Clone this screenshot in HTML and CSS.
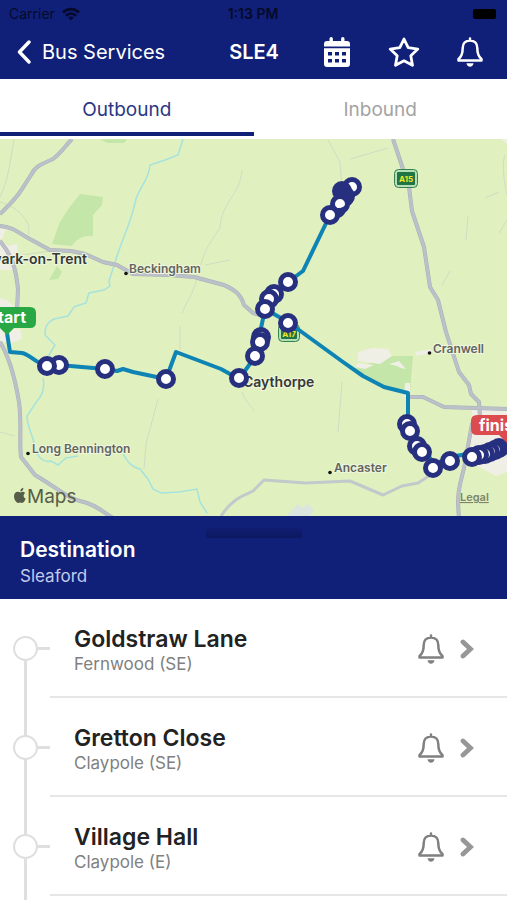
FILE: index.html
```html
<!DOCTYPE html>
<html lang="en">
<head>
    <meta charset="UTF-8">
    <meta name="viewport" content="width=device-width, initial-scale=1.0">
    <title>SLE4</title>
    <link rel="stylesheet" href="styles.css">
</head>
<body>
    <svg class="defs" aria-hidden="true">
        <symbol id="bell" viewBox="0 0 26 30">
            <path d="M13 1.500v2M13 3.500c-4.800 0-7.300 3.300-7.300 7.500C5.700 17.500 4.300 20 1.500 22v1.500h23V22c-2.800-2-4.200-4.500-4.200-11 0-4.200-2.500-7.500-7.300-7.500z" fill="none" stroke="currentColor" stroke-width="2.500" stroke-linecap="round" stroke-linejoin="round"/>
            <path d="M9.500 26.300h7c-.3 2.200-1.700 3.400-3.500 3.400s-3.200-1.200-3.500-3.400z" fill="currentColor"/>
        </symbol>
        <symbol id="chevron" viewBox="0 0 14 20">
            <path d="M3 3l7.500 7L3 17" fill="none" stroke="currentColor" stroke-width="4.800" stroke-linecap="round" stroke-linejoin="miter"/>
        </symbol>
    </svg>

    <div class="app">
        <header class="header">
            <div class="status">
                <div class="carrier">
                    <span>Carrier</span>
                    <svg width="18" height="14" viewBox="0 0 18 14">
                        <g fill="none" stroke="currentColor" stroke-width="2.800">
                            <path d="M1 5.500c4.500-4.600 11.500-4.600 16 0"/>
                            <path d="M4 8.800c2.900-2.900 7.100-2.900 10 0"/>
                        </g>
                        <path d="M9 13.500l-2.800-3c1.600-1.500 4-1.500 5.600 0z" fill="currentColor"/>
                    </svg>
                </div>
                <div class="time">1:13 PM</div>
                <div class="battery"><span></span></div>
            </div>
            <nav class="nav">
                <a class="back" href="#">
                    <svg width="14" height="24" viewBox="0 0 14 24"><path d="M12 2L2.500 12 12 22" fill="none" stroke="currentColor" stroke-width="3.400" stroke-linecap="round" stroke-linejoin="round"/></svg>
                    Bus Services
                </a>
                <h1 class="title">SLE4</h1>
                <div class="actions">
                    <button class="icon-btn" aria-label="Timetable">
                        <svg width="28" height="30" viewBox="0 0 28 30">
                            <path d="M1 9.500V7c0-2 1-3 3-3h2.500V1.800a1.500 1.500 0 0 1 3.400 0V4h8.200V1.800a1.500 1.500 0 0 1 3.400 0V4H24c2 0 3 1 3 3v2.500z" fill="currentColor"/>
                            <path fill-rule="evenodd" d="M1 11.200h26V27c0 2-1 3-3 3H4c-2 0-3-1-3-3zM5 15v3.600h4V15zM12 15v3.600h4V15zM19 15v3.600h4V15zM5 22v3.600h4V22zM12 22v3.600h4V22zM19 22v3.600h4V22z" fill="currentColor"/>
                        </svg>
                    </button>
                    <button class="icon-btn" aria-label="Favourite">
                        <svg width="32" height="30" viewBox="0 0 32 30">
                            <path d="M16 2l4.200 8.700 9.600 1.400-7 6.700 1.700 9.500L16 23.800l-8.500 4.500 1.700-9.500-7-6.700 9.600-1.400z" fill="none" stroke="currentColor" stroke-width="2.800" stroke-linejoin="round"/>
                        </svg>
                    </button>
                    <button class="icon-btn" aria-label="Alerts">
                        <svg width="26" height="30"><use href="#bell"/></svg>
                    </button>
                </div>
            </nav>
        </header>

        <div class="tabs" role="tablist">
            <button class="tab active" role="tab" aria-selected="true">Outbound</button>
            <button class="tab" role="tab" aria-selected="false">Inbound</button>
        </div>

        <svg class="map" viewBox="0 139 507 377">
            <!-- woods and built up areas -->
            <path class="wood" d="M80 194l23 3-1 8-9 10v21c-9-1-17 3-21 10l-20-2 8-22 9-14zM57 266l5 6-4 7-9 1z"/>
            <path class="wood" d="M100 139h27l-3 4h-17zM392 356h21l-3 36-16-1-24-12-18-10z"/>
            <path class="town" d="M0 228l6 1-4 10H0zM0 240l9 6 8-2 2 18-7 8H0zM0 298l7 2 8 7H0zM0 329h20l2 10-10 4-12-2z"/>
            <path class="town" d="M358 352l14-4 16 1 4 7-12 8-22-3zM358 363l16 2-9 4-10-2zM389 364l10-3 7 8-5-1-4-2zM405 383h5v14h-6z"/>
            <path class="town" d="M472 409h35v63l-11 4-26-14zM415 352l16-3v4l-14 3zM501 139h6v5z"/>
            <path class="airfield" d="M288 514l10-10 4 4 6-4 6 7-5 5h-21z"/>

            <!-- lanes -->
            <g class="lane">
                <path d="M14 139c-4 24-6 42-14 58M0 202c16 4 26 16 28 22 2 6 0 8 1 11M328 140l12 22 2 26M350 159l38-11M242 170c-2 26-20 30-22 58-15 22-14 20-22 45-4 20-8 22-16 40"/>
                <path d="M158 399l-12 45-2 25M342 382l-4 50M468 216l-2 24M450 271l-8 14M505 155c-4 10 0 30 2 40M485 198l14-6M0 432l15 4M242 392c4 12 12 16 12 19M507 220l-8 13M205 265l25-5M180 350v-24M22 255l28-4"/>
            </g>

            <!-- rivers -->
            <g class="river">
                <path d="M183 139l-5 16-13 5-15 5c-1 14-9 20-14 34-5 24-13 38-20 60l-7 22 1 5-6 4-15 3-3 10-12 4-6 9-14 3c-8 4-9 9-9 16l10 10-6 10-12 10"/>
                <path d="M43 378c2 10-1 18-6 23l-10 15c0 12 7 20 8 33 4 10 9 14 16 12l7 4 8-7 12-2M123 454c5 8 8 13 17 15l8 10 5 10 8 4 18-1 18-3 3 13 7 11"/>
            </g>

            <!-- minor and main roads -->
            <g class="road-edge">
                <path d="M0 214c8-8 16-15 22-25l9-14c4-8 8-10 20-15 8-4 14-14 21-21M0 226c14 1 20 8 28 12l22 12 21 1 14 3 18 8 14 3 16 9 36 1 25 2 30 8c8 4 16 7 20 20l9 8 14 4"/>
                <path d="M0 241c12 14 16 28 18 48l-1 22M0 342c10 16 15 36 19 60 3 22 0 38 2 55l14 18c22 13 34 24 45 26 15 3 23 11 33 17"/>
                <path d="M393 139l16 48 3 24 12 36 6 40 8 13 8 32 13 40 10 13 2 9 8 8 1 14-8 8-8 44c-6 23-7 28-5 50"/>
                <path d="M408 397h15l21 10 63 2"/>
            </g>
            <g class="road">
                <path d="M0 214c8-8 16-15 22-25l9-14c4-8 8-10 20-15 8-4 14-14 21-21M0 226c14 1 20 8 28 12l22 12 21 1 14 3 18 8 14 3 16 9 36 1 25 2 30 8c8 4 16 7 20 20l9 8 14 4"/>
                <path d="M0 241c12 14 16 28 18 48l-1 22M0 342c10 16 15 36 19 60 3 22 0 38 2 55l14 18c22 13 34 24 45 26 15 3 23 11 33 17"/>
                <path d="M393 139l16 48 3 24 12 36 6 40 8 13 8 32 13 40 10 13 2 9 8 8 1 14-8 8-8 44c-6 23-7 28-5 50"/>
                <path d="M408 397h15l21 10 63 2"/>
            </g>
            <path class="road-minor" d="M221 516c12-18 22-20 32-25l11-11 42 3 44-2 33 14 19-9 16-3 14-9"/>

            <!-- places -->
            <g class="place">
                <text x="129" y="273">Beckingham</text>
                <text x="32" y="453">Long Bennington</text>
                <text x="433" y="353">Cranwell</text>
                <text x="334" y="472">Ancaster</text>
            </g>
            <g class="place place-big">
                <text x="87" y="264" text-anchor="end">Newark-on-Trent</text>
                <text x="243" y="387">Caythorpe</text>
            </g>
            <g class="dot">
                <circle cx="126" cy="273.500" r="1.800"/>
                <circle cx="28" cy="453.500" r="1.800"/>
                <circle cx="429.500" cy="353" r="1.800"/>
                <circle cx="330" cy="472.500" r="1.800"/>
            </g>

            <!-- road numbers -->
            <g class="shield">
                <rect class="shield-frame" x="394.500" y="169.500" width="23" height="18" rx="4"/>
                <rect x="397" y="172" width="18" height="13" rx="1"/>
                <text x="406" y="182">A15</text>
                <rect class="shield-frame" x="278.500" y="324.500" width="21" height="17" rx="4"/>
                <rect x="281" y="327" width="16" height="12" rx="1"/>
                <text x="289" y="337">A17</text>
            </g>

            <!-- bus route -->
            <path class="route" d="M7 333l3 19 12 1c6 1 10 6 16 9l9 4 12-1 46 4 12 2 6-2 10 3 33 7 10-27 45 17 18 10 16-22 10-48 23 13 55 40 20 14 21 11 24 6v27l3 7 12 21 11 16 17-7 21-4 25-8"/>
            <path class="route" d="M265 309l8-15 15-12 15-11 27-56 22-29"/>

            <path class="pin-start" d="M0 307h30q6 0 6 6v9q0 6-6 6H14l-7 7-7-7z"/>
            <text class="pin-text" x="26" y="323" text-anchor="end">start</text>

            <g class="stop-pin">
                <circle cx="352" cy="187" r="7.500"/>
                <circle cx="345" cy="196" r="7.500"/>
                <circle class="full" cx="342" cy="191" r="7.500"/>
                <circle class="full" cx="344" cy="198" r="7"/>
                <circle cx="340" cy="204" r="7.500"/>
                <path class="fill" d="M334 206c3 3 9 3 12-2 3 7-4 16-12 14z"/>
                <circle cx="330" cy="215" r="7.500"/>
                <circle cx="288" cy="282" r="7.500"/>
                <circle cx="274" cy="294" r="7.500"/>
                <circle cx="269" cy="299" r="7.500"/>
                <circle cx="265" cy="309" r="7.500"/>
                <circle cx="288" cy="323" r="7.500"/>
                <circle cx="261" cy="337" r="7.500"/>
                <circle cx="260" cy="342" r="7.500"/>
                <circle cx="255" cy="356" r="7.500"/>
                <circle cx="239" cy="378" r="7.500"/>
                <circle cx="166" cy="379" r="7.500"/>
                <circle cx="105" cy="369" r="7.500"/>
                <circle cx="59" cy="365" r="7.500"/>
                <circle cx="47" cy="366" r="7.500"/>
                <circle cx="407" cy="424" r="7.500"/>
                <circle cx="410" cy="431" r="7.500"/>
                <circle cx="417" cy="446" r="7.500"/>
                <circle cx="422" cy="452" r="7.500"/>
                <circle cx="433" cy="468" r="7.500"/>
                <circle cx="450" cy="461" r="7.500"/>
                <circle cx="499" cy="448" r="7.500"/>
                <circle cx="495" cy="450" r="7.500"/>
                <circle cx="490" cy="452" r="7.500"/>
                <circle cx="485" cy="454" r="7.500"/>
                <circle cx="479" cy="455" r="7.500"/>
                <circle cx="472" cy="457" r="7.500"/>
            </g>

            <path class="pin-finish" d="M477 415h30v28l-8-8h-22q-6 0-6-6v-8q0-6 6-6z"/>
            <text class="pin-text" x="479" y="431">finish</text>

            <!-- attribution -->
            <path class="apple" d="M20.500 492.500c1.800-1.200 3.300-.9 4.600.4-2.200 1.700-1.900 4.500.6 5.700-.9 2.600-2.300 4.400-3.600 4.400-.8 0-1.200-.4-2-.4s-1.300.4-2 .4c-1.900 0-4.100-3.800-4.100-6.700 0-3.800 3-5.500 6.500-3.800zM20.300 491.600c-.1-2 1.300-3.600 3.100-3.800.1 2.100-1.400 3.700-3.100 3.800z"/>
            <text class="maps" x="27" y="503">Maps</text>
            <a href="#"><text class="legal" x="460" y="501">Legal</text></a>
        </svg>

        <section class="destination">
            <div class="handle"></div>
            <h2>Destination</h2>
            <p>Sleaford</p>
        </section>

        <ul class="stops">
            <li class="stop">
                <span class="marker"></span>
                <div class="stop-body">
                    <div class="stop-text">
                        <h3>Goldstraw Lane</h3>
                        <p>Fernwood (SE)</p>
                    </div>
                    <button class="icon-btn" aria-label="Set alert for Goldstraw Lane"><svg width="26" height="30"><use href="#bell"/></svg></button>
                    <a class="more" href="#" aria-label="Goldstraw Lane"><svg width="14" height="20"><use href="#chevron"/></svg></a>
                </div>
            </li>
            <li class="stop">
                <span class="marker"></span>
                <div class="stop-body">
                    <div class="stop-text">
                        <h3>Gretton Close</h3>
                        <p>Claypole (SE)</p>
                    </div>
                    <button class="icon-btn" aria-label="Set alert for Gretton Close"><svg width="26" height="30"><use href="#bell"/></svg></button>
                    <a class="more" href="#" aria-label="Gretton Close"><svg width="14" height="20"><use href="#chevron"/></svg></a>
                </div>
            </li>
            <li class="stop">
                <span class="marker"></span>
                <div class="stop-body">
                    <div class="stop-text">
                        <h3>Village Hall</h3>
                        <p>Claypole (E)</p>
                    </div>
                    <button class="icon-btn" aria-label="Set alert for Village Hall"><svg width="26" height="30"><use href="#bell"/></svg></button>
                    <a class="more" href="#" aria-label="Village Hall"><svg width="14" height="20"><use href="#chevron"/></svg></a>
                </div>
            </li>
        </ul>
    </div>
</body>
</html>
```

FILE: styles.css
```css
:root {
    --navy: #102079;
    --pin: #26307f;
    --line: #dfdfdf;
    --grey: #808080;
    --route: #0e84b5;
}

* {
    margin: 0;
    padding: 0;
    box-sizing: border-box;
}

body {
    background: #fff;
    font-family: Inter, "Liberation Sans", sans-serif;
}

button {
    border: none;
    background: none;
    font: inherit;
    color: inherit;
    cursor: pointer;
}

a {
    color: inherit;
    text-decoration: none;
}

svg {
    display: block;
}

.defs {
    position: absolute;
    width: 0;
    height: 0;
}

.app {
    min-height: 100vh;
    display: flex;
    flex-direction: column;
}

/* Header */
.header {
    background: var(--navy);
    color: #fff;
}

.status {
    display: grid;
    grid-template-columns: 1fr auto 1fr;
    align-items: center;
    height: 27px;
    padding: 0 10px 0 9px;
    color: #050a2b;
    font-size: 14px;
}

.carrier {
    display: flex;
    align-items: center;
    gap: 7px;
}

.time {
    font-weight: 600;
}

.battery {
    justify-self: end;
    padding: 1px;
}

.battery span {
    display: block;
    width: 23px;
    height: 10px;
    border-radius: 2px;
    background: #000;
}

.nav {
    display: grid;
    grid-template-columns: 1fr auto 1fr;
    align-items: center;
    height: 52px;
    padding: 0 24px 2px 17px;
}

.back {
    display: flex;
    align-items: center;
    gap: 11px;
    font-size: 20px;
}

.title {
    padding-left: 8px;
    font-size: 20px;
    font-weight: 600;
}

.actions {
    display: flex;
    justify-content: flex-end;
    gap: 37px;
}

.icon-btn {
    flex: none;
}

/* Tabs */
.tabs {
    display: flex;
    height: 60px;
    padding-bottom: 3px;
}

.tab {
    flex: 1;
    padding-top: 8px;
    border-bottom: 4px solid transparent;
    color: #a3a3a3;
    font-size: 19px;
}

.tab.active {
    border-color: var(--navy);
    color: #2b3785;
}

/* Map */
.map {
    width: 100%;
    height: auto;
    background: #e1f0bf;
}

.wood {
    fill: #c4e6a9;
}

.town {
    fill: #efefe6;
}

.airfield {
    fill: #dbe5df;
}

.lane {
    fill: none;
    stroke: #d2dcc4;
    stroke-width: 1;
}

.river {
    fill: none;
    stroke: #a5e3dc;
    stroke-width: 1.5;
}

.road-edge,
.road,
.road-minor {
    fill: none;
    stroke-linejoin: round;
}

.road-edge {
    stroke: #a9afb8;
    stroke-width: 4;
}

.road {
    stroke: #bcc1c9;
    stroke-width: 3;
}

.road-minor {
    stroke: #c3c9cb;
    stroke-width: 3;
}

.place {
    fill: #62665f;
    font-size: 12px;
    font-weight: 600;
    stroke: #eff6dd;
    stroke-width: 2;
    paint-order: stroke;
}

.place-big {
    fill: #363935;
    font-size: 14px;
    font-weight: 600;
}

.dot {
    fill: #111;
}

.shield {
    fill: #217443;
    text-anchor: middle;
}

.shield-frame {
    fill: #b4dfb7;
    stroke: #35824f;
    stroke-width: 1;
}

.shield text {
    fill: #f5e529;
    font-size: 8px;
    font-weight: 700;
}

.route {
    fill: none;
    stroke: var(--route);
    stroke-width: 4;
    stroke-linejoin: round;
}

.stop-pin {
    fill: #fff;
    stroke: var(--pin);
    stroke-width: 5;
}

.stop-pin .full,
.stop-pin .fill {
    fill: var(--pin);
}

.stop-pin .fill {
    stroke: none;
}

.pin-start {
    fill: #28a745;
}

.pin-finish {
    fill: #dc4b4e;
}

.pin-text {
    fill: #fff;
    font-size: 16px;
    font-weight: 700;
}

.apple {
    fill: #565d49;
}

.maps {
    fill: #565d49;
    font-size: 19px;
}

.legal {
    fill: #7d866b;
    font-size: 11px;
    font-weight: 600;
    text-decoration: underline;
}

/* Destination */
.destination {
    display: flex;
    flex-direction: column;
    height: 83px;
    padding: 0 20px;
    background: var(--navy);
    color: #fff;
}

.handle {
    align-self: center;
    width: 96px;
    height: 10px;
    margin: 12px 0 0;
    border-radius: 2px;
    background: linear-gradient(#0f1e72, #0c195f);
}

.destination h2 {
    font-size: 21px;
    font-weight: 600;
    line-height: 24px;
}

.destination p {
    color: #c3caec;
    font-size: 17px;
    line-height: 28px;
}

/* Stops */
.stops {
    flex: 1;
    list-style: none;
    background: linear-gradient(var(--line), var(--line)) 24px 50px / 3px 100% no-repeat;
}

.stop {
    display: flex;
    height: 99px;
    padding-left: 13px;
}

/* ring on the line with a short arm to the right */
.marker {
    position: relative;
    align-self: center;
    width: 25px;
    height: 25px;
    margin-right: 12px;
    border: 2px solid var(--line);
    border-radius: 50%;
    background: #fff;
}

.marker::after {
    content: '';
    position: absolute;
    top: 9px;
    left: 100%;
    width: 14px;
    height: 3px;
    background: var(--line);
}

.stop-body {
    flex: 1;
    display: flex;
    align-items: center;
    padding: 2px 33px 0 24px;
    border-bottom: 2px solid #e6e6e6;
}

.stop-text {
    flex: 1;
    padding-top: 2px;
}

.stop-text h3 {
    color: #222;
    font-size: 23px;
    font-weight: 600;
    line-height: 28px;
}

.stop-text p {
    color: var(--grey);
    font-size: 17px;
    line-height: 22px;
}

.stop-body .icon-btn {
    color: var(--grey);
}

.more {
    margin-left: 16px;
    color: #979797;
}
```
